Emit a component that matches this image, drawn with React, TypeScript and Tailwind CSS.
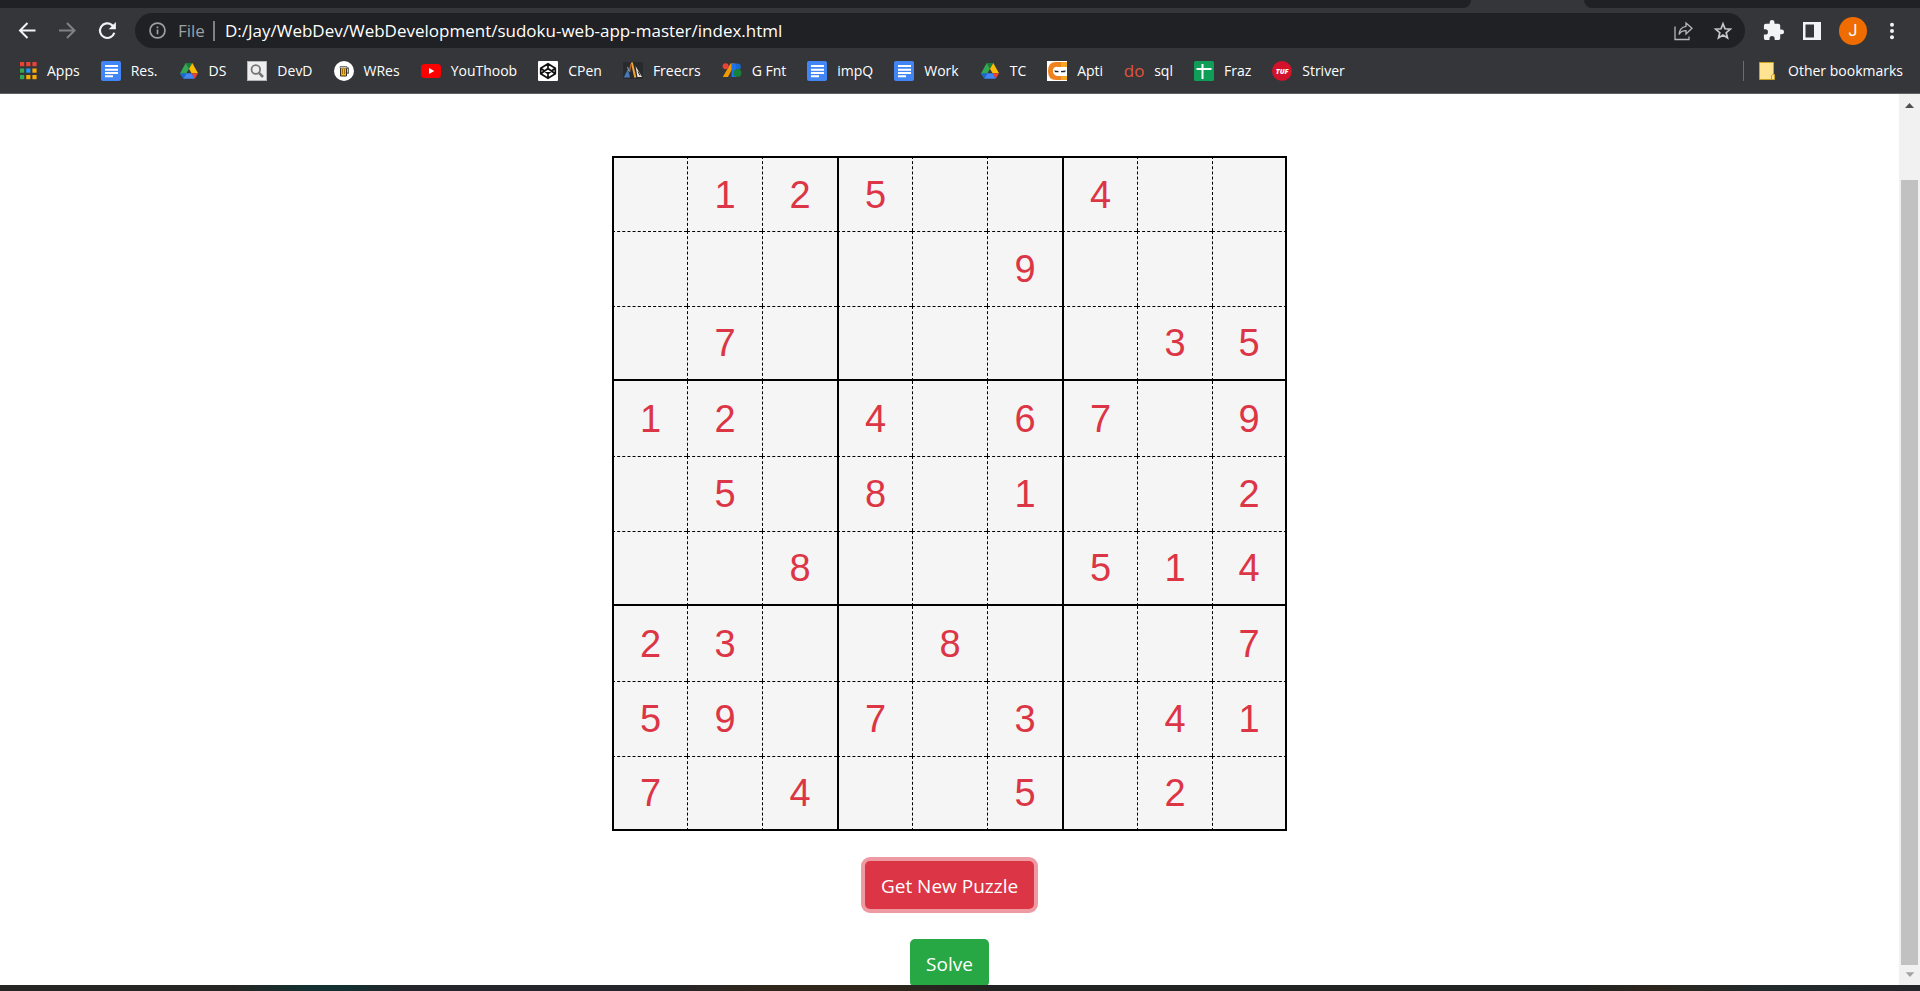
import React from "react";

type Bookmark = { label: string; icon: React.ReactNode };

const DocsIcon = () => (
  <svg viewBox="0 0 20 20" className="size-5 shrink-0" aria-hidden="true">
    <rect width="20" height="20" rx="2" fill="#4285f4" />
    <path d="M4 4h13v2H4zM4 7.700h13v2H4zM4 11h13v2H4zM4 14.300h8v2H4z" fill="#fff" />
  </svg>
);

const DriveIcon = () => (
  <svg viewBox="0 0 20 20" className="size-5 shrink-0" aria-hidden="true">
    <path d="M6.700 2h6.600L10 7.800z" fill="#188038" />
    <path d="M6.700 2L10 7.800 4.400 17.500 1 12.600z" fill="#34a853" />
    <path d="M13.300 2L19 12.200h-6.500L10 7.800z" fill="#fbbc04" />
    <path d="M12.500 12.200H19l-3.300 5.600z" fill="#ea4335" />
    <path d="M1 12.200h6.500l-3.200 5.600z" fill="#1967d2" />
    <path d="M7.500 12.200h5l3.200 5.600H4.300z" fill="#4285f4" />
  </svg>
);

const AppsIcon = () => {
  const colors = ["#ea4335", "#ea4335", "#ea4335", "#34a853", "#2196f3", "#f9ab00", "#34a853", "#f9ab00", "#f9ab00"];
  return (
    <svg viewBox="0 0 20 20" className="size-5 shrink-0" aria-hidden="true">
      {colors.map((c, i) => (
        <rect key={i} x={3 + (i % 3) * 6.2} y={1 + Math.floor(i / 3) * 6.5} width="4.200" height="4.200" fill={c} />
      ))}
    </svg>
  );
};

const SearchIcon = () => (
  <svg viewBox="0 0 20 20" className="size-5 shrink-0" aria-hidden="true">
    <rect x=".5" y=".5" width="19" height="19" fill="#eee" stroke="#b5b5b5" />
    <circle cx="8.800" cy="8.500" r="4.300" fill="none" stroke="#777" strokeWidth="1.800" />
    <path d="M12 11.800l4 4.200" stroke="#777" strokeWidth="2.600" />
  </svg>
);

const BeerIcon = () => (
  <svg viewBox="0 0 20 20" className="size-5 shrink-0" aria-hidden="true">
    <circle cx="10" cy="10" r="10" fill="#fff" />
    <path d="M12.500 7.200h1.800v5h-1.800" fill="none" stroke="#555" strokeWidth="1.200" />
    <path d="M6.500 6h6v9h-6z" fill="#f6b70f" stroke="#3a3024" />
    <path d="M8.500 8v5M10.500 8v5" stroke="#a87406" />
    <path d="M6 5.500h7v1.700H6z" fill="#e9e3d6" stroke="#444" strokeWidth=".6" />
  </svg>
);

const YouTubeIcon = () => (
  <svg viewBox="0 0 20 20" className="size-5 shrink-0" aria-hidden="true">
    <rect y="3" width="20" height="14" rx="3.500" fill="#f00" />
    <path d="M8 7v6l5.300-3z" fill="#fff" />
  </svg>
);

const CodePenIcon = () => (
  <svg viewBox="0 0 20 20" className="size-5 shrink-0" aria-hidden="true">
    <rect width="20" height="20" rx="1" fill="#fff" />
    <path
      d="M10 2.700l7.300 4.500v5.600L10 17.300l-7.300-4.500V7.200zM10 2.700v4.800M10 12.500v4.800M2.700 7.200l7.300 5.300 7.300-5.300M2.700 12.800L10 7.500l7.300 5.300"
      fill="none"
      stroke="#111"
      strokeWidth="1.700"
      strokeLinejoin="round"
    />
  </svg>
);

const FreecrsIcon = () => (
  <svg viewBox="0 0 20 20" className="size-5 shrink-0" aria-hidden="true">
    <rect y="1" width="20" height="17" fill="#292a2d" />
    <path d="M5 8l2 8.500H.8z" fill="#477ab9" />
    <path d="M4.500 6l1.500 4" stroke="#86aed7" />
    <path d="M8.800 1.500l3.500 15" stroke="#f2a33a" strokeWidth="2" />
    <path d="M8 3l-1.500 8" stroke="#a76b2e" strokeWidth="1.400" />
    <path d="M12.500 5l6.500 11h-4.500z" fill="#f2ead8" />
    <path d="M15 10.500l2 4" stroke="#292a2d" />
  </svg>
);

const FontsIcon = () => (
  <svg viewBox="0 0 20 20" className="size-5 shrink-0" aria-hidden="true">
    <path d="M8.500 2.500H13L6 16H.8z" fill="#f29900" />
    <path d="M9.500 2.500H14V16H9.500z" fill="#1a73e8" />
    <circle cx="3.600" cy="5.300" r="3" fill="#ea4335" />
    <path d="M14 2.500h1.500a3.300 3.300 0 010 6.600H14z" fill="#1967d2" />
    <circle cx="15.500" cy="11.900" r="3.900" fill="#188038" />
  </svg>
);

const NinjaIcon = () => (
  <svg viewBox="0 0 20 20" className="size-5 shrink-0" aria-hidden="true">
    <rect width="20" height="20" fill="#fff" />
    <path d="M20 1H9Q1 1 1 10t8 9h11v-4h-9q-4.500 0-4.500-5T11 6h9z" fill="#f0821e" />
    <path d="M20 1h-6v5h6zM20 15h-6v4h6z" fill="#f5a623" />
    <rect x="6" y="6.500" width="14" height="7" rx="3" fill="#fff" />
    <path d="M7 9.500l4.500.4v1.300H8.300zM19 9.500l-5 .4v1.300h3.700z" fill="#222" />
  </svg>
);

const DoIcon = () => (
  <span
    aria-hidden="true"
    className="flex h-5 w-5 shrink-0 items-center justify-center text-[17px] leading-5 font-medium text-[#e0533d]"
  >
    do
  </span>
);

const SheetIcon = () => (
  <svg viewBox="0 0 20 20" className="size-5 shrink-0" aria-hidden="true">
    <rect width="20" height="20" rx="1.500" fill="#0f9d58" />
    <path d="M8.500 3v15M2.500 8h15" stroke="#fff" strokeWidth="2" />
  </svg>
);

const TufIcon = () => (
  <span
    aria-hidden="true"
    className="flex size-5 shrink-0 items-center justify-center rounded-full bg-[#d3122b] text-[7px] leading-none font-black text-white italic"
  >
    TUF
  </span>
);

const bookmarks: Bookmark[] = [
  { label: "Apps", icon: <AppsIcon /> },
  { label: "Res.", icon: <DocsIcon /> },
  { label: "DS", icon: <DriveIcon /> },
  { label: "DevD", icon: <SearchIcon /> },
  { label: "WRes", icon: <BeerIcon /> },
  { label: "YouThoob", icon: <YouTubeIcon /> },
  { label: "CPen", icon: <CodePenIcon /> },
  { label: "Freecrs", icon: <FreecrsIcon /> },
  { label: "G Fnt", icon: <FontsIcon /> },
  { label: "impQ", icon: <DocsIcon /> },
  { label: "Work", icon: <DocsIcon /> },
  { label: "TC", icon: <DriveIcon /> },
  { label: "Apti", icon: <NinjaIcon /> },
  { label: "sql", icon: <DoIcon /> },
  { label: "Fraz", icon: <SheetIcon /> },
  { label: "Striver", icon: <TufIcon /> },
];

const puzzle = [
  " 125  4  ",
  "     9   ",
  " 7     35",
  "12 4 67 9",
  " 5 8 1  2",
  "  8   514",
  "23  8   7",
  "59 7 3 41",
  "7 4  5 2 ",
];

function cellBorder(row: number, col: number) {
  return [
    row === 0 ? "border-t-2" : row % 3 === 0 ? "" : "border-t [border-top-style:dashed]",
    row % 3 === 2 ? "border-b-2" : "",
    col % 3 === 0 ? "border-l-2" : "border-l [border-left-style:dashed]",
    col === 8 ? "border-r-2" : "",
  ].join(" ");
}

function Toolbar() {
  return (
    <div className="flex h-[45px] shrink-0 items-center">
      <div className="flex w-[135px] shrink-0 items-center gap-5 pl-[17px]">
        <button aria-label="Back" className="text-[#f1f3f4]">
          <svg viewBox="0 0 20 20" className="size-5" fill="none" stroke="currentColor" strokeWidth="2">
            <path d="M18.500 9.500H3.500M10.500 2L3 9.500l7.500 7.500" />
          </svg>
        </button>
        <button aria-label="Forward" className="text-[#808185]">
          <svg viewBox="0 0 20 20" className="size-5" fill="none" stroke="currentColor" strokeWidth="2">
            <path d="M2 9.500h15M10 2l7.500 7.500-7.500 7.500" />
          </svg>
        </button>
        <button aria-label="Reload" className="text-[#f1f3f4]">
          <svg viewBox="0 0 20 20" className="size-5" fill="none" stroke="currentColor" strokeWidth="2.200">
            <path d="M17.300 11.700A7.300 7.300 0 1115 4.100L17 6" />
            <path d="M18.900 1v7.200h-7.200z" fill="currentColor" stroke="none" />
          </svg>
        </button>
      </div>
      <div className="flex h-[35px] flex-1 items-center rounded-full bg-[#202124] px-3 text-[17px]">
        <svg
          viewBox="0 0 18 18"
          className="ml-0.5 size-[17px] shrink-0 text-[#9aa0a6]"
          fill="none"
          stroke="currentColor"
          strokeWidth="1.800"
          aria-hidden="true"
        >
          <circle cx="9" cy="9" r="7.900" />
          <path d="M9 8v5M9 4.700v2" />
        </svg>
        <span className="ml-3 text-[#9aa0a6]">File</span>
        <span className="ml-2 h-5 w-0.5 bg-[#7d8084]" />
        <input
          aria-label="Address"
          readOnly
          value="D:/Jay/WebDev/WebDevelopment/sudoku-web-app-master/index.html"
          className="ml-2.5 min-w-0 flex-1 bg-transparent text-white outline-none"
        />
        <button aria-label="Share" className="text-[#b4b6b9]">
          <svg viewBox="0 0 20 20" className="size-5" fill="none" stroke="currentColor" strokeWidth="1.300">
            <path d="M2 5.500v13h14v-3" />
            <path d="M13 2l6 5.300L13 13V9.700c-3.300 0-5.500 1-7 3.800.4-4.500 2.800-7.600 7-8.200z" />
          </svg>
        </button>
        <button aria-label="Bookmark this page" className="ml-5 text-[#c6c8ca]">
          <svg viewBox="0 0 20 20" className="size-5" fill="none" stroke="currentColor" strokeWidth="1.700">
            <path d="M10 2.800l2 5 5.300.4-4.100 3.500 1.300 5.300-4.500-2.900L5.500 17l1.300-5.300-4.100-3.500L8 7.800z" />
          </svg>
        </button>
      </div>
      <div className="flex shrink-0 items-center pr-[18px] pl-[17px] text-[#f1f3f4]">
        <button aria-label="Extensions">
          <svg viewBox="0 0 24 24" className="size-[23px]" fill="currentColor">
            <path d="M20.500 11H19V7c0-1.100-.9-2-2-2h-4V3.500a2.500 2.500 0 00-5 0V5H4c-1.100 0-2 .9-2 2v3.800h1.500a2.700 2.700 0 010 5.400H2V20c0 1.100.9 2 2 2h3.800v-1.500a2.700 2.700 0 015.400 0V22H17c1.100 0 2-.9 2-2v-4h1.500a2.500 2.500 0 000-5z" />
          </svg>
        </button>
        <button aria-label="Side panel" className="ml-[17px]">
          <svg viewBox="0 0 20 20" className="size-5">
            <path fillRule="evenodd" d="M1 1h18v18H1zM3.500 3.500v13H12v-13z" fill="currentColor" />
          </svg>
        </button>
        <button
          aria-label="Profile"
          className="ml-[17px] flex size-7 items-center justify-center rounded-full bg-[#ef6c00] font-[Roboto,sans-serif] text-base text-white"
        >
          J
        </button>
        <button aria-label="Menu" className="ml-[15px]">
          <svg viewBox="0 0 20 20" className="size-5" fill="currentColor">
            <circle cx="10" cy="3.700" r="2" />
            <circle cx="10" cy="10" r="2" />
            <circle cx="10" cy="16.300" r="2" />
          </svg>
        </button>
      </div>
    </div>
  );
}

function BookmarksBar() {
  return (
    <nav
      aria-label="Bookmarks"
      className="flex h-10 shrink-0 items-start overflow-hidden px-[17px] pt-2 text-sm leading-5 text-white"
    >
      <div className="flex flex-1 gap-[21px]">
        {bookmarks.map((b) => (
          <a key={b.label} href="#" className="flex shrink-0 items-center gap-2.5 whitespace-nowrap">
            {b.icon}
            {b.label}
          </a>
        ))}
      </div>
      <a href="#" className="flex shrink-0 items-center gap-3 border-l border-[#6a6c70] pl-3.5 whitespace-nowrap">
        <svg viewBox="0 0 18 20" className="h-5 w-[18px]" aria-hidden="true">
          <path d="M1.500 1.500h14v12h1v5h-15z" fill="#ffe391" stroke="#c9a227" />
          <path d="M13.500 18.500v-4l2-1.500" fill="none" stroke="#c9a227" />
        </svg>
        Other bookmarks
      </a>
    </nav>
  );
}

function Board() {
  return (
    <div className="grid grid-cols-[repeat(9,75px)] grid-rows-[repeat(9,75px)] font-['Liberation_Sans',Arial,sans-serif]">
      {puzzle.flatMap((line, row) =>
        line.split("").map((digit, col) => (
          <input
            key={`${row}-${col}`}
            type="text"
            inputMode="numeric"
            maxLength={1}
            defaultValue={digit.trim()}
            aria-label={`Row ${row + 1}, column ${col + 1}`}
            className={`min-w-0 border-black bg-[#f5f5f5] pt-px text-center text-[38px] text-[#dc3545] outline-none ${cellBorder(row, col)}`}
          />
        )),
      )}
    </div>
  );
}

function Scrollbar() {
  return (
    <div aria-hidden="true" className="flex w-[21px] shrink-0 flex-col items-center bg-[#f1f1f1]">
      <svg viewBox="0 0 21 21" className="size-[21px]">
        <path d="M6 14l4.500-5 4.500 5z" fill="#505050" />
      </svg>
      <div className="mt-[65px] w-[17px] flex-1 bg-[#c1c1c1]" />
      <svg viewBox="0 0 21 21" className="size-5">
        <path d="M6 7.500l4.500 5 4.500-5z" fill="#a3a3a3" />
      </svg>
    </div>
  );
}

export default function App() {
  return (
    <div className="flex h-screen flex-col overflow-hidden bg-white font-['Open_Sans','Noto_Sans',sans-serif]">
      <header className="flex shrink-0 flex-col border-b border-[#5f6368] bg-[#35363a]">
        <div className="flex h-2" aria-hidden="true">
          <div className="flex-1 rounded-br-[10px] bg-[#202124]" />
          <div className="w-[113px]" />
          <div className="w-[336px] rounded-bl-[10px] bg-[#202124]" />
        </div>
        <Toolbar />
        <BookmarksBar />
      </header>
      <div className="flex min-h-0 flex-1">
        <main className="flex min-w-0 flex-1 flex-col items-center overflow-hidden pt-[62px]">
          <Board />
          <button className="mt-[30px] h-12 shrink-0 rounded-[5px] bg-[#dc3545] px-4 pt-0.5 text-[19px] text-white ring-4 ring-[#ee9aa2]">
            Get New Puzzle
          </button>
          <button className="mt-[30px] h-12 shrink-0 rounded-[5px] bg-[#28a745] px-4 pt-0.5 text-[19px] text-white">
            Solve
          </button>
        </main>
        <Scrollbar />
      </div>
      <div
        aria-hidden="true"
        className="h-1.5 shrink-0 bg-[linear-gradient(90deg,#262624_0%,#262624_12%,#12302f_16%,#12302f_18%,#24262b_21%,#24262b_34%,#30261a_40%,#30261a_45%,#212322_52%,#212322_82%,#2c261d_86%,#212a2c_92%,#24262a_100%)]"
      />
    </div>
  );
}
